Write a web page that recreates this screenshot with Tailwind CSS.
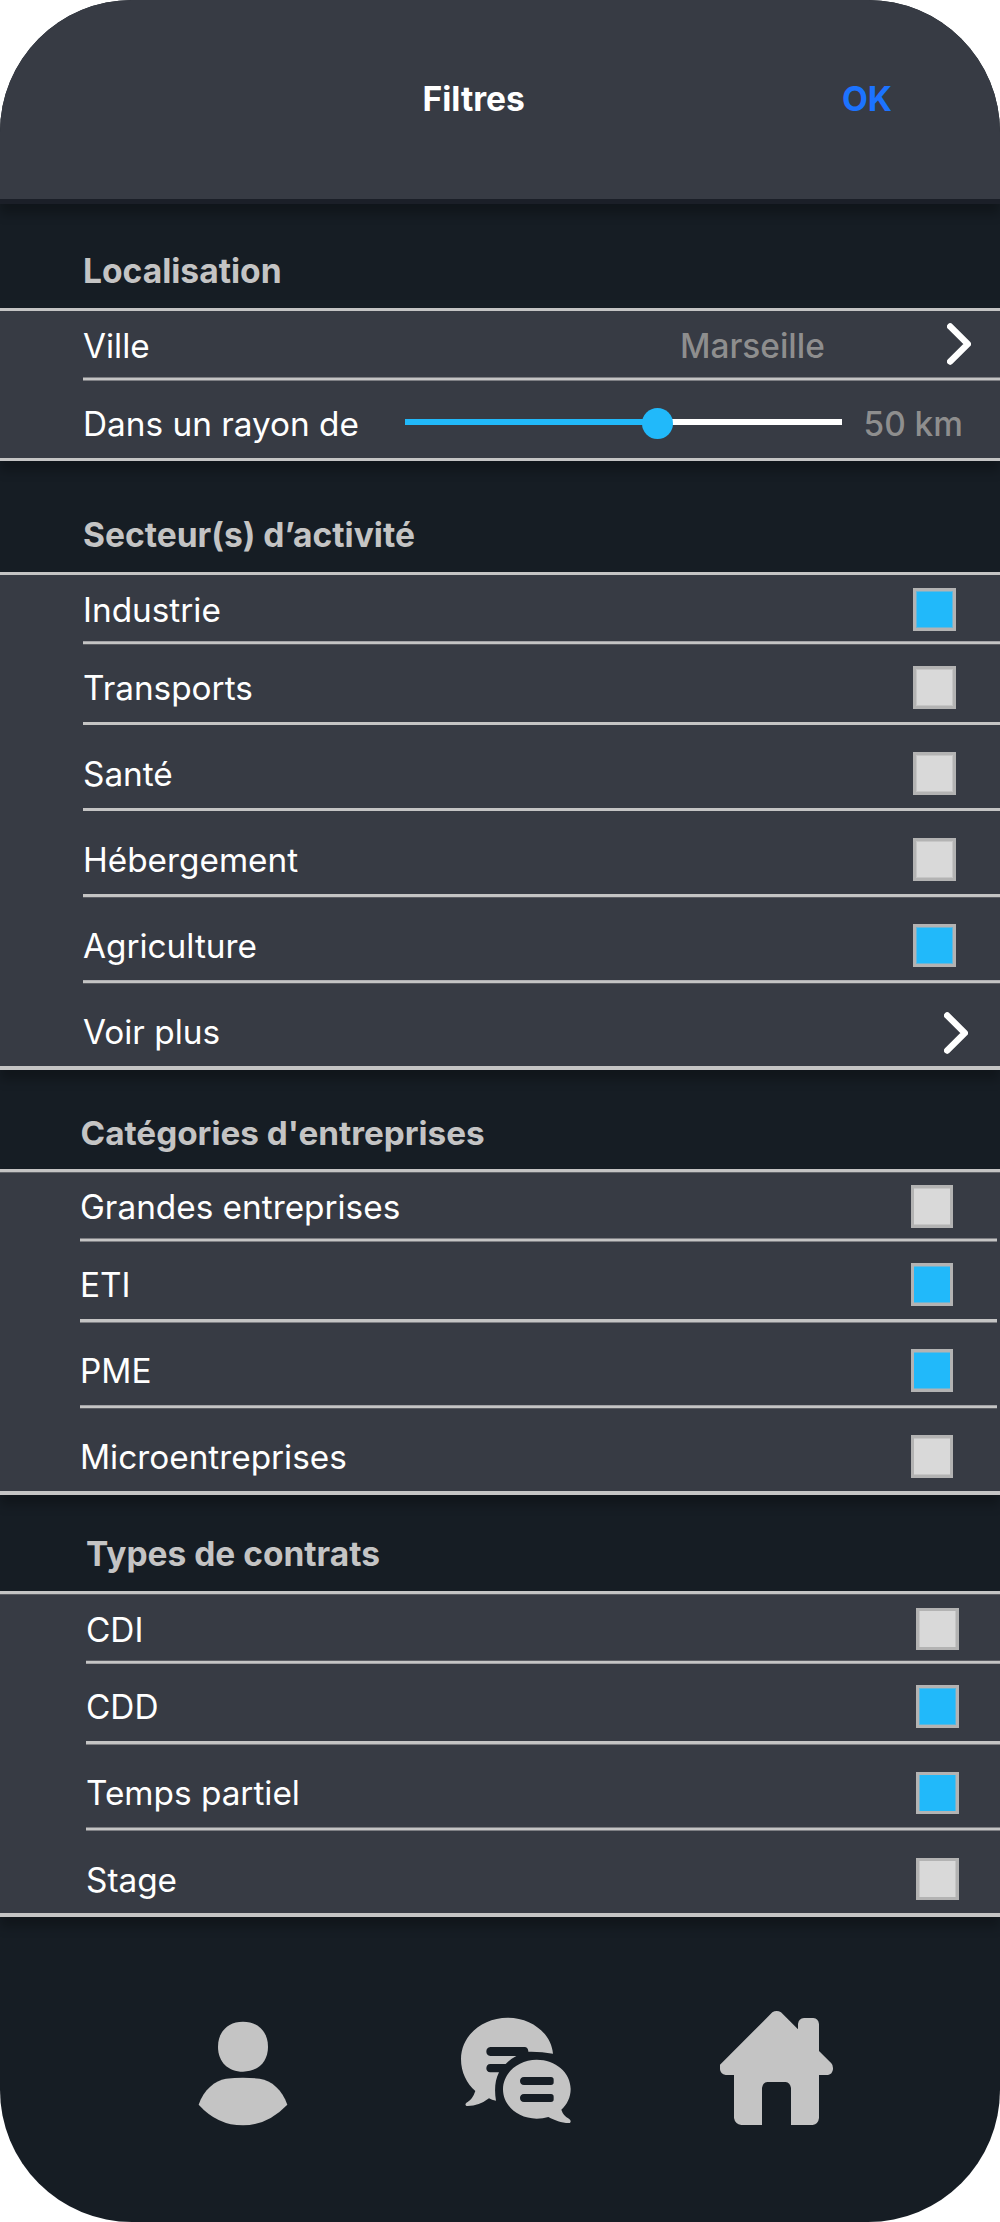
<!DOCTYPE html>
<html lang="fr">
<head>
<meta charset="utf-8">
<title>Filtres</title>
<script src="https://cdn.jsdelivr.net/npm/@tailwindcss/browser@4"></script>
</head>
<body class="bg-white">
<div class="flex h-[2222px] w-[1000px] flex-col overflow-hidden rounded-[132px] bg-[#161d24] font-['Inter',sans-serif] text-[33.35px] leading-[45px] whitespace-nowrap text-white">

  <header class="flex h-[204px] shrink-0 items-start border-b-[5px] border-[#1b1f28] bg-[#373b44] pt-[76px] pl-[422.5px] font-bold shadow-[0_10px_10px_rgba(0,0,0,0.25)]">
    <h1 class="w-[419.5px] text-[33.6px]">Filtres</h1>
    <button class="text-[33.6px] leading-[45px] text-[#1c73ff]">OK</button>
  </header>

  <!-- Localisation -->
  <h2 class="h-[104px] shrink-0 pt-[44px] pl-[83px] text-[33.6px] font-bold text-[#c4c4c4]">Localisation</h2>
  <section class="shrink-0 border-y-[3px] border-[#c4c4c4] bg-[#373b44] shadow-[0_10px_10px_rgba(0,0,0,0.25)]">
    <div class="flex h-[66px] items-start pt-[13px] pl-[83px]">
      <span class="w-[597px]">Ville</span>
      <span class="w-[267px] text-[33.4px] font-medium text-[#8e8e8e]">Marseille</span>
      <svg class="-mt-px h-[43px] w-[24px]" viewBox="0 0 24 43" fill="none" stroke="#fff" stroke-width="6.4" stroke-linecap="round" stroke-linejoin="round"><path d="M3.2 3.5 20.8 21 3.2 38.5"/></svg>
    </div>
    <div class="ml-[83px] h-[4px] border-y border-[#7e7f84] bg-[#c4c4c4]"></div>
    <div class="flex h-[77px] items-start pt-[21px] pl-[83px]">
      <span class="w-[322px]">Dans un rayon de</span>
      <div class="relative mt-[17px] flex h-[6px] w-[437px]">
        <div class="w-[252px] bg-[#21b9fa]"></div>
        <div class="flex-1 bg-white"></div>
        <div class="absolute top-[-11px] left-[236.5px] size-[31px] rounded-full bg-[#21b9fa]"></div>
      </div>
      <span class="ml-[21.5px] text-[33.4px] font-medium text-[#8e8e8e]">50 km</span>
    </div>
  </section>

  <!-- Secteurs -->
  <h2 class="h-[111px] shrink-0 pt-[51px] pl-[83px] text-[33.6px] font-bold text-[#c4c4c4]">Secteur(s) d’activité</h2>
  <section class="shrink-0 border-t-[3px] border-b-[4px] border-[#c4c4c4] bg-[#373b44] pl-[83px] shadow-[0_10px_10px_rgba(0,0,0,0.25)]">
    <div class="flex h-[66px] items-start justify-between pt-[13px] pr-[44px]">
      <span>Industrie</span>
      <i class="h-[43px] w-[43px] border-[3px] border-[#b3b3b3] bg-[#21b9fa] shadow-[inset_0_0_0_1px_rgba(179,179,179,0.5)]"></i>
    </div>
    <div class="h-[4px] border-t border-b border-t-[#a1a1a5] border-b-[#5b5d64] bg-[#c4c4c4]"></div>
    <div class="flex h-[77px] items-start justify-between pt-[21px] pr-[44px]">
      <span>Transports</span>
      <i class="h-[43px] w-[43px] border-[3px] border-[#b3b3b3] bg-[#d9d9d9] shadow-[inset_0_0_0_1px_rgba(179,179,179,0.5)]"></i>
    </div>
    <div class="h-[3px] bg-[#c4c4c4]"></div>
    <div class="flex h-[83px] items-start justify-between pt-[27px] pr-[44px]">
      <span>Santé</span>
      <i class="h-[43px] w-[43px] border-[3px] border-[#b3b3b3] bg-[#d9d9d9] shadow-[inset_0_0_0_1px_rgba(179,179,179,0.5)]"></i>
    </div>
    <div class="h-[3px] bg-[#c4c4c4]"></div>
    <div class="flex h-[83px] items-start justify-between pt-[27px] pr-[44px]">
      <span>Hébergement</span>
      <i class="h-[43px] w-[43px] border-[3px] border-[#b3b3b3] bg-[#d9d9d9] shadow-[inset_0_0_0_1px_rgba(179,179,179,0.5)]"></i>
    </div>
    <div class="h-[4px] border-b border-[#5b5d64] bg-[#c4c4c4]"></div>
    <div class="flex h-[82px] items-start justify-between pt-[26px] pr-[44px]">
      <span>Agriculture</span>
      <i class="h-[43px] w-[43px] border-[3px] border-[#b3b3b3] bg-[#21b9fa] shadow-[inset_0_0_0_1px_rgba(179,179,179,0.5)]"></i>
    </div>
    <div class="h-[4px] border-t border-b border-t-[#b0b0b3] border-b-[#5b5d64] bg-[#c4c4c4]"></div>
    <div class="flex h-[82px] items-start justify-between pt-[26px] pr-[32px]">
      <span>Voir plus</span>
      <svg class="mt-[1.5px] h-[43px] w-[24px]" viewBox="0 0 24 43" fill="none" stroke="#fff" stroke-width="6.4" stroke-linecap="round" stroke-linejoin="round"><path d="M3.2 3.5 20.8 21 3.2 38.5"/></svg>
    </div>
  </section>

  <!-- Catégories -->
  <h2 class="h-[99px] shrink-0 pt-[41px] pl-[80.5px] text-[33.3px] font-bold text-[#c4c4c4]">Catégories d'entreprises</h2>
  <section class="shrink-0 border-t-[3px] border-b-[4px] border-[#c4c4c4] bg-[#373b44] pl-[80px] shadow-[0_10px_10px_rgba(0,0,0,0.25)]">
    <div class="-ml-[80px] h-px bg-[#62656b]"></div>
    <div class="flex h-[65px] items-start justify-between pt-[12px] pr-[47px]">
      <span>Grandes entreprises</span>
      <i class="h-[43px] w-[42px] border-[3px] border-[#b3b3b3] bg-[#d9d9d9] shadow-[inset_0_1px_0_rgba(179,179,179,0.5),inset_0_-1px_0_rgba(179,179,179,0.5)]"></i>
    </div>
    <div class="mr-[3px] h-[4px] border-y border-[#7e7f84] bg-[#c4c4c4]"></div>
    <div class="flex h-[77px] items-start justify-between pt-[21px] pr-[47px]">
      <span>ETI</span>
      <i class="h-[43px] w-[42px] border-[3px] border-[#b3b3b3] bg-[#21b9fa] shadow-[inset_0_1px_0_rgba(179,179,179,0.5),inset_0_-1px_0_rgba(179,179,179,0.5)]"></i>
    </div>
    <div class="mr-[3px] h-[4px] border-b border-[#7e7f84] bg-[#c4c4c4]"></div>
    <div class="flex h-[82px] items-start justify-between pt-[26px] pr-[47px]">
      <span>PME</span>
      <i class="h-[43px] w-[42px] border-[3px] border-[#b3b3b3] bg-[#21b9fa] shadow-[inset_0_1px_0_rgba(179,179,179,0.5),inset_0_-1px_0_rgba(179,179,179,0.5)]"></i>
    </div>
    <div class="mr-[3px] h-[4px] border-t border-b border-t-[#a1a1a5] border-b-[#5b5d64] bg-[#c4c4c4]"></div>
    <div class="flex h-[82px] items-start justify-between pt-[26px] pr-[47px]">
      <span>Microentreprises</span>
      <i class="h-[43px] w-[42px] border-[3px] border-[#b3b3b3] bg-[#d9d9d9] shadow-[inset_0_1px_0_rgba(179,179,179,0.5),inset_0_-1px_0_rgba(179,179,179,0.5)]"></i>
    </div>
  </section>

  <!-- Contrats -->
  <h2 class="h-[96px] shrink-0 pt-[37px] pl-[86px] text-[33.5px] font-bold text-[#c4c4c4]">Types de contrats</h2>
  <section class="shrink-0 border-t-[3px] border-b-[4px] border-[#c4c4c4] bg-[#373b44] pl-[86px] shadow-[0_10px_10px_rgba(0,0,0,0.25)]">
    <div class="-ml-[86px] h-px bg-[#5b5d64]"></div>
    <div class="flex h-[65px] items-start justify-between pt-[13px] pr-[41px]">
      <span class="leading-[44px]">CDI</span>
      <i class="h-[42px] w-[43px] border-[3px] border-[#b3b3b3] bg-[#d9d9d9] shadow-[inset_1px_0_0_rgba(179,179,179,0.5),inset_-1px_0_0_rgba(179,179,179,0.5)]"></i>
    </div>
    <div class="h-[4px] border-t border-b border-t-[#5b5d64] border-b-[#a1a1a5] bg-[#c4c4c4]"></div>
    <div class="flex h-[77px] items-start justify-between pt-[21px] pr-[41px]">
      <span>CDD</span>
      <i class="h-[43px] w-[43px] border-[3px] border-[#b3b3b3] bg-[#21b9fa] shadow-[inset_0_0_0_1px_rgba(179,179,179,0.4)]"></i>
    </div>
    <div class="h-[4px] border-b border-[#7e7f84] bg-[#c4c4c4]"></div>
    <div class="flex h-[82px] items-start justify-between pt-[27px] pr-[41px]">
      <span class="leading-[43px]">Temps partiel</span>
      <i class="h-[42px] w-[43px] border-[3px] border-[#b3b3b3] bg-[#21b9fa] shadow-[inset_1px_0_0_rgba(179,179,179,0.5),inset_-1px_0_0_rgba(179,179,179,0.5)]"></i>
    </div>
    <div class="h-[4px] border-y border-[#7e7f84] bg-[#c4c4c4]"></div>
    <div class="flex h-[82px] items-start justify-between pt-[27px] pr-[41px]">
      <span class="leading-[44px]">Stage</span>
      <i class="h-[42px] w-[43px] border-[3px] border-[#b3b3b3] bg-[#d9d9d9] shadow-[inset_1px_0_0_rgba(179,179,179,0.5),inset_-1px_0_0_rgba(179,179,179,0.5)]"></i>
    </div>
  </section>

  <!-- Navigation -->
  <nav class="flex flex-1 items-start pt-[73px] pl-[180px]">
    <svg class="h-[150px] w-[260px]" viewBox="0 0 780 450" fill="#c4c4c4">
      <path d="M189 95C234 95 264 125 264 170S234 245 189 245 114 215 114 170 144 95 189 95Z"/>
      <path d="M56 344C70 300 105 271 138 266Q189 261 239 266C275 271 307 300 322 344Q262 406 189 406 112 406 56 344Z"/>
    </svg>
    <svg class="h-[150px] w-[260px]" viewBox="0 0 780 450" fill="#c4c4c4">
      <path d="M203 83C274 83 334 130 339 191Q302 184 265 185C265 175 259 171 253 171H151C135 171 135 198 151 198H229Q210 208 197 222H151C135 222 135 247 151 247H177C164 272 163 303 168 332Q155 330 147 325Q116 349 80 348C74 346 76 339 83 336Q98 327 106 303C80 280 63 247 63 207C63 138 126 83 203 83Z"/>
      <path fill-rule="evenodd" d="M290 209C347 209 392 248 392 297C392 322 381 344 364 359Q370 378 388 387Q395 393 390 399C366 400 345 391 325 381Q309 386 290 386C234 386 189 347 189 298S234 209 290 209ZM252 261C236 261 236 285 252 285H333Q341 285 341 277V269Q341 261 333 261ZM252 312C236 312 236 336 252 336H333Q341 336 341 328V320Q341 312 333 312Z"/>
    </svg>
    <svg class="h-[150px] w-[140px]" viewBox="0 0 420 450" fill="#c4c4c4">
      <path d="M217 67Q230 59 243 67L294 118V102Q296 86 312 84H340Q355 86 357 102V183L394 220Q400 226 399 238Q397 253 384 255H357V384Q355 402 338 405H273V294Q270 278 257 276H202Q188 278 186 294V405H124Q105 402 102 384V255H77Q61 252 60 238V224Z"/>
    </svg>
  </nav>
</div>
</body>
</html>
